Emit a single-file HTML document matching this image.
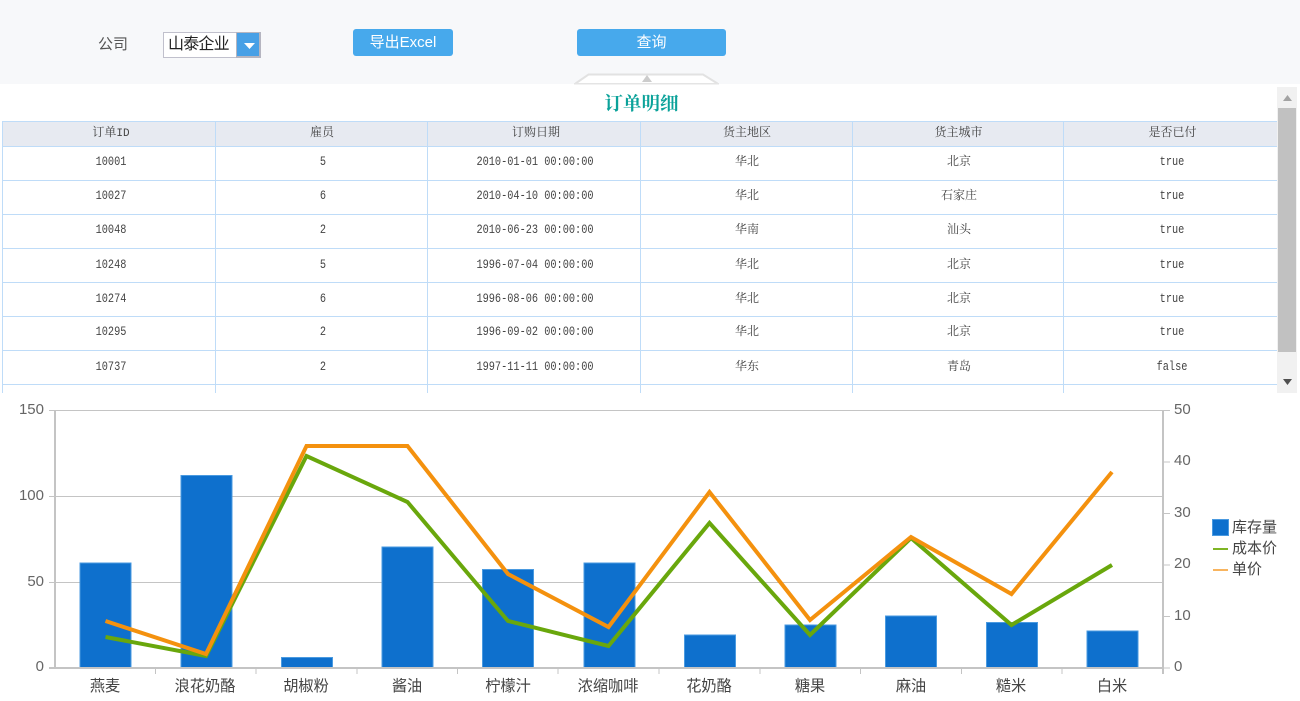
<!DOCTYPE html>
<html><head><meta charset="utf-8">
<style>
html,body{margin:0;padding:0;background:#fff}
#p{position:relative;width:1300px;height:701px;overflow:hidden;background:#fff;font-family:"Liberation Sans","Noto Sans CJK SC",sans-serif;filter:blur(.3px)}
.a{position:absolute}
.c{position:absolute;text-align:center;font-size:12px;color:#444;font-family:"Liberation Mono","Noto Serif CJK SC",monospace;line-height:16px;white-space:nowrap}
.m{font-size:13px;transform:scaleX(.79);transform-origin:center;margin-top:-1px}
.btn{position:absolute;background:#47a9ec;color:#fff;border-radius:3px;text-align:center}
</style></head><body>
<div id="p">
<div class="a" style="left:0;top:0;width:1300px;height:84px;background:#f7f8fa"></div>
<div class="a" style="left:98px;top:36px;font-size:15px;color:#555;line-height:18px">公司</div>
<div class="a" style="left:163px;top:32px;width:96px;height:24px;border:1px solid #c0c0cc;background:#fff"></div>
<div class="a" style="left:168px;top:34px;font-size:16px;letter-spacing:-.8px;color:#222;line-height:21px">山泰企业</div>
<div class="a" style="left:236px;top:32px;width:25px;height:26px;background:#b5b5c0"></div>
<div class="a" style="left:237px;top:33px;width:22px;height:23px;background:#47a0e6"></div>
<svg class="a" style="left:244px;top:42px" width="12" height="8"><path d="M0 1H11L5.500 7Z" fill="#fff"/></svg>
<div class="btn" style="left:353px;top:29px;width:100px;height:27px;font-size:15px;line-height:28px">导出Excel</div>
<div class="btn" style="left:577px;top:29px;width:149px;height:27px;font-size:15px;line-height:28px">查询</div>
<svg class="a" style="left:570px;top:70px" width="155" height="16">
<path d="M5.500 13.500L18.500 4.500H133L147.500 13.500" fill="#fff" stroke="#e2e2e2" stroke-width="2"/>
<path d="M72 12L77 5L82 12Z" fill="#ccc"/>
<rect x="4" y="13" width="145" height="1.500" fill="#e4e4e4"/>
</svg>
<div class="a" style="left:3px;top:93px;width:1277px;text-align:center;font-size:18.500px;font-weight:bold;line-height:24px;color:#0ba29a;font-family:'Liberation Serif','Noto Serif CJK SC',serif">订单明细</div>

<!-- table -->
<div class="a" style="left:2px;top:121px;width:1275px;height:25px;background:#e7eaf1"></div>
<svg class="a" style="left:0;top:118px" width="1280" height="275" shape-rendering="crispEdges">
<g fill="#bfdcf8">
<rect x="2" y="3" width="1275" height="1"/>
<rect x="2" y="28" width="1275" height="1"/>
<rect x="2" y="62" width="1275" height="1"/>
<rect x="2" y="96" width="1275" height="1"/>
<rect x="2" y="130" width="1275" height="1"/>
<rect x="2" y="164" width="1275" height="1"/>
<rect x="2" y="198" width="1275" height="1"/>
<rect x="2" y="232" width="1275" height="1"/>
<rect x="2" y="266" width="1275" height="1"/>
<rect x="2" y="3" width="1" height="272"/>
<rect x="215" y="3" width="1" height="272"/>
<rect x="427" y="3" width="1" height="272"/>
<rect x="640" y="3" width="1" height="272"/>
<rect x="852" y="3" width="1" height="272"/>
<rect x="1063" y="3" width="1" height="272"/>
</g>
</svg>
<div class="c" style="left:3px;top:125px;width:216px">订单<span style="font-size:11px">ID</span></div>
<div class="c" style="left:216px;top:125px;width:212px">雇员</div>
<div class="c" style="left:428px;top:125px;width:216px">订购日期</div>
<div class="c" style="left:641px;top:125px;width:212px">货主地区</div>
<div class="c" style="left:853px;top:125px;width:211px">货主城市</div>
<div class="c" style="left:1064px;top:125px;width:217px">是否已付</div>

<div class="c m" style="left:3px;top:155px;width:216px">10001</div><div class="c m" style="left:216px;top:155px;width:214px">5</div><div class="c m" style="left:428px;top:155px;width:214px">2010-01-01 00:00:00</div><div class="c" style="left:641px;top:154px;width:212px">华北</div><div class="c" style="left:853px;top:154px;width:212px">北京</div><div class="c m" style="left:1064px;top:155px;width:216px">true</div>
<div class="c m" style="left:3px;top:189px;width:216px">10027</div><div class="c m" style="left:216px;top:189px;width:214px">6</div><div class="c m" style="left:428px;top:189px;width:214px">2010-04-10 00:00:00</div><div class="c" style="left:641px;top:188px;width:212px">华北</div><div class="c" style="left:853px;top:188px;width:212px">石家庄</div><div class="c m" style="left:1064px;top:189px;width:216px">true</div>
<div class="c m" style="left:3px;top:223px;width:216px">10048</div><div class="c m" style="left:216px;top:223px;width:214px">2</div><div class="c m" style="left:428px;top:223px;width:214px">2010-06-23 00:00:00</div><div class="c" style="left:641px;top:222px;width:212px">华南</div><div class="c" style="left:853px;top:222px;width:212px">汕头</div><div class="c m" style="left:1064px;top:223px;width:216px">true</div>
<div class="c m" style="left:3px;top:258px;width:216px">10248</div><div class="c m" style="left:216px;top:258px;width:214px">5</div><div class="c m" style="left:428px;top:258px;width:214px">1996-07-04 00:00:00</div><div class="c" style="left:641px;top:257px;width:212px">华北</div><div class="c" style="left:853px;top:257px;width:212px">北京</div><div class="c m" style="left:1064px;top:258px;width:216px">true</div>
<div class="c m" style="left:3px;top:292px;width:216px">10274</div><div class="c m" style="left:216px;top:292px;width:214px">6</div><div class="c m" style="left:428px;top:292px;width:214px">1996-08-06 00:00:00</div><div class="c" style="left:641px;top:291px;width:212px">华北</div><div class="c" style="left:853px;top:291px;width:212px">北京</div><div class="c m" style="left:1064px;top:292px;width:216px">true</div>
<div class="c m" style="left:3px;top:325px;width:216px">10295</div><div class="c m" style="left:216px;top:325px;width:214px">2</div><div class="c m" style="left:428px;top:325px;width:214px">1996-09-02 00:00:00</div><div class="c" style="left:641px;top:324px;width:212px">华北</div><div class="c" style="left:853px;top:324px;width:212px">北京</div><div class="c m" style="left:1064px;top:325px;width:216px">true</div>
<div class="c m" style="left:3px;top:360px;width:216px">10737</div><div class="c m" style="left:216px;top:360px;width:214px">2</div><div class="c m" style="left:428px;top:360px;width:214px">1997-11-11 00:00:00</div><div class="c" style="left:641px;top:359px;width:212px">华东</div><div class="c" style="left:853px;top:359px;width:212px">青岛</div><div class="c m" style="left:1064px;top:360px;width:216px">false</div>

<!-- scrollbar -->
<div class="a" style="left:1277px;top:87px;width:20px;height:306px;background:#f1f1f1"></div>
<div class="a" style="left:1278px;top:108px;width:18px;height:244px;background:#c1c1c1"></div>
<svg class="a" style="left:1277px;top:87px" width="21" height="306">
<path d="M6 14L10.500 8L15 14Z" fill="#a3a3a3"/>
<path d="M6 292L10.500 298L15 292Z" fill="#505050"/>
</svg>

<!-- chart -->
<svg class="a" style="left:0;top:395px" width="1300" height="306" viewBox="0 395 1300 306">
<g stroke="#c4c4c4" fill="none">
<path d="M49 410.500H1163M49 496.500H1163M49 582.500H1163" stroke-width="1"/>
</g>
<g fill="#0e70cd" stroke="#4a9ae0" stroke-width="1">
<rect x="80" y="563" width="51" height="105"/>
<rect x="181" y="475.500" width="51" height="192.500"/>
<rect x="281.500" y="657.500" width="51" height="10.500"/>
<rect x="382" y="547" width="51" height="121"/>
<rect x="482.500" y="569.500" width="51" height="98.500"/>
<rect x="584" y="563" width="51" height="105"/>
<rect x="684.500" y="635" width="51" height="33"/>
<rect x="785" y="625" width="51" height="43"/>
<rect x="885.500" y="616" width="51" height="52"/>
<rect x="986.500" y="622.500" width="51" height="45.500"/>
<rect x="1087" y="631" width="51" height="37"/>
</g>
<g stroke="#c4c4c4" fill="none">
<path d="M55 410V668M1163 410V674" stroke-width="2"/>
<path d="M49 668H1163" stroke-width="2"/>
<path d="M155.500 668V674M256 668V674M357 668V674M457.500 668V674M558 668V674M659 668V674M760 668V674M860.500 668V674M961.500 668V674M1062 668V674" stroke-width="1"/>
<path d="M1163 410.500H1170M1163 462H1170M1163 513.500H1170M1163 565H1170M1163 616.500H1170M1163 668H1170" stroke-width="1"/>
</g>
<polyline fill="none" stroke="#69a70c" stroke-width="4" points="105.500,637 206,656 306.500,456 407.500,502 508,621 608.500,646 709.500,523 810,635 911,538 1011.500,625 1112,565"/>
<polyline fill="none" stroke="#f4910e" stroke-width="4" points="105.500,621 206,654 306.500,446 407.500,446 508,574 608.500,627 709.500,492 810,620 911,537 1011.500,594 1112,472"/>
<g font-family="'Liberation Sans','DejaVu Sans',sans-serif" font-size="15" fill="#666">
<text x="44" y="414" text-anchor="end">150</text>
<text x="44" y="500" text-anchor="end">100</text>
<text x="44" y="586" text-anchor="end">50</text>
<text x="44" y="671" text-anchor="end">0</text>
<text x="1174" y="414">50</text>
<text x="1174" y="465">40</text>
<text x="1174" y="517">30</text>
<text x="1174" y="568">20</text>
<text x="1174" y="620">10</text>
<text x="1174" y="671">0</text>
</g>
<g font-family="'Liberation Sans','Noto Sans CJK SC',sans-serif" font-size="15.200" fill="#444" text-anchor="middle">
<text x="105" y="691">燕麦</text>
<text x="205" y="691">浪花奶酪</text>
<text x="306" y="691">胡椒粉</text>
<text x="407" y="691">酱油</text>
<text x="508" y="691">柠檬汁</text>
<text x="608" y="691">浓缩咖啡</text>
<text x="709" y="691">花奶酪</text>
<text x="810" y="691">糖果</text>
<text x="911" y="691">麻油</text>
<text x="1011" y="691">糙米</text>
<text x="1112" y="691">白米</text>
</g>
<rect x="1212.500" y="519.500" width="16" height="16" fill="#0e70cd" stroke="#4a9ae0"/>
<rect x="1213" y="548" width="15" height="2" fill="#7fb524"/>
<rect x="1213" y="569" width="15" height="2" fill="#f8b45e"/>
<g font-family="'Liberation Sans','Noto Sans CJK SC',sans-serif" font-size="15" fill="#444">
<text x="1232" y="532">库存量</text>
<text x="1232" y="553">成本价</text>
<text x="1232" y="574">单价</text>
</g>
</svg>
</div>
</body></html>
